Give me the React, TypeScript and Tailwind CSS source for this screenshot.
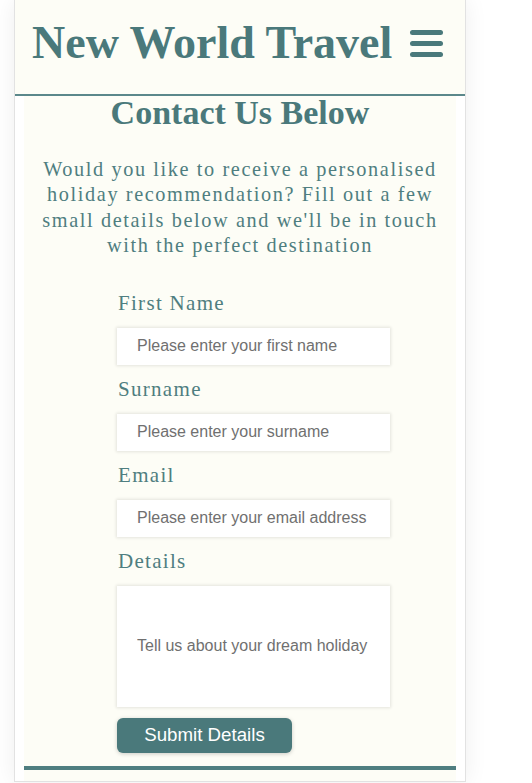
import React from "react";

const fields = [
  { label: "First Name", placeholder: "Please enter your first name", tall: false },
  { label: "Surname", placeholder: "Please enter your surname", tall: false },
  { label: "Email", placeholder: "Please enter your email address", tall: false },
  { label: "Details", placeholder: "Tell us about your dream holiday", tall: true },
];

const App = () => {
  return (
    <div className="w-[532px] min-h-[783px] bg-white">
      <div className="ml-[14px] w-[452px] h-[782px] border-x border-b border-[#e2e2e2] bg-white shadow-[0_0_22px_rgba(0,0,0,0.07)] overflow-hidden">
        {/* Header */}
        <header className="h-[96px] bg-[#fdfdf6] border-b-2 border-[#5b888b] flex items-center justify-between pl-[17px] pr-[22px] pb-[8px]">
          <h1 className="whitespace-nowrap font-['Liberation_Serif',serif] font-bold text-[46px] leading-[46px] text-[#4a797b]">
            New World Travel
          </h1>
          <div className="flex flex-col gap-[6px]">
            <span className="block w-[33px] h-[5px] rounded-full bg-[#4a797b]"></span>
            <span className="block w-[33px] h-[5px] rounded-full bg-[#4a797b]"></span>
            <span className="block w-[33px] h-[5px] rounded-full bg-[#4a797b]"></span>
          </div>
        </header>

        {/* Contact section */}
        <main className="mx-[9px] bg-[#fdfdf6] border-b-4 border-[#4f7e80] pb-[13px]">
          <h2 className="pt-[1.5px] text-center font-['Liberation_Serif',serif] font-bold text-[34px] leading-[30px] text-[#4a797b]">
            Contact Us Below
          </h2>
          <p className="mt-[29px] text-center font-['Liberation_Serif',serif] text-[20.3px] leading-[25.6px] tracking-[1.6px] text-[#4f7e80]">
            Would you like to receive a personalised
            <br />
            holiday recommendation? Fill out a few
            <br />
            small details below and we'll be in touch
            <br />
            with the perfect destination
          </p>

          <form className="ml-[93px] mt-[30px] w-[273px] flex flex-col gap-[10px]">
            {fields.map((f) => (
              <div key={f.label} className="flex flex-col">
                <label className="pl-[1px] font-['Liberation_Serif',serif] text-[21px] leading-[28px] tracking-[1.3px] text-[#4f7e80]">
                  {f.label}
                </label>
                <input
                  type="text"
                  placeholder={f.placeholder}
                  className={`mt-[11px] w-[273px] ${f.tall ? "h-[121px]" : "h-[37px]"} bg-white pl-[20px] font-['Liberation_Sans',Arial,sans-serif] text-[16px] text-[#555] placeholder:text-[#707070] shadow-[0_0_3px_1px_rgba(0,0,0,0.1)] outline-none`}
                />
              </div>
            ))}
            <button
              type="button"
              className="mt-[1px] w-[175px] h-[35px] rounded-[6px] bg-[#4a797b] text-white font-['Liberation_Sans',Arial,sans-serif] text-[18.7px] shadow-[0_1px_4px_rgba(0,0,0,0.2)]"
            >
              Submit Details
            </button>
          </form>
        </main>
        <div className="mx-[9px] h-[11px] bg-[#fdfdf6]"></div>
      </div>
    </div>
  );
};

export default App;
